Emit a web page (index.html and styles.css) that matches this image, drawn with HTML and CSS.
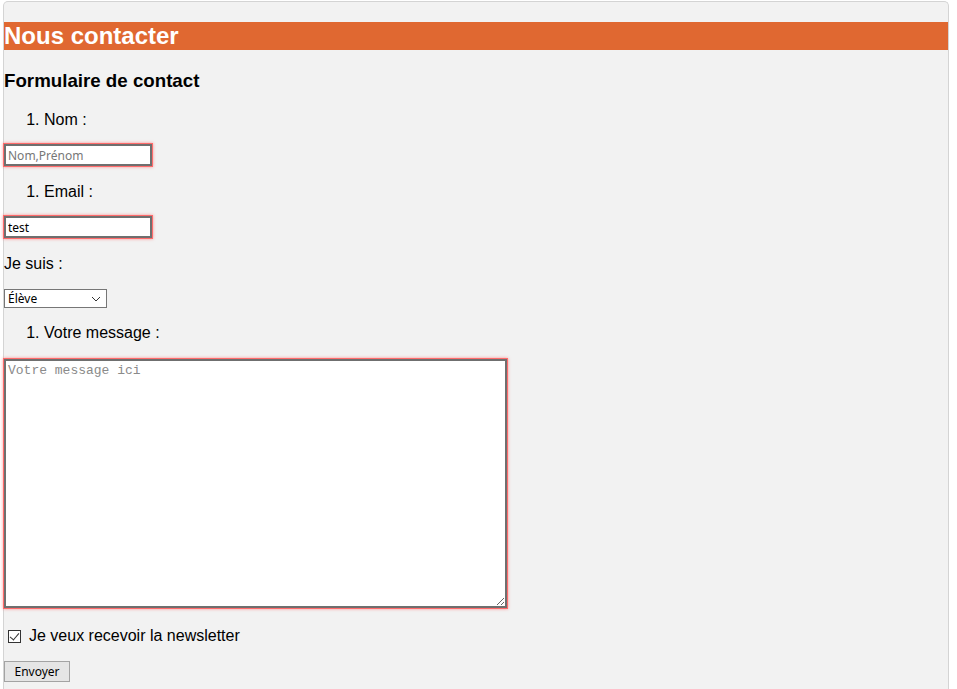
FILE: index.html
```html
<!DOCTYPE html>
<html lang="fr">
<head>
<meta charset="utf-8">
<title>Nous contacter</title>
<link rel="stylesheet" href="styles.css">
</head>
<body>
<div class="page">
  <h1 class="title">Nous contacter</h1>
  <h2 class="subtitle">Formulaire de contact</h2>
  <form class="form">
    <ol class="field-list"><li>Nom :</li></ol>
    <input class="text-input" type="text" placeholder="Nom,Prénom">
    <ol class="field-list"><li>Email :</li></ol>
    <input class="text-input" type="text" value="test">
    <p class="plain-label">Je suis :</p>
    <span class="select-wrap">
      <select class="select">
        <option>Élève</option>
        <option>Parent</option>
        <option>Professeur</option>
      </select>
      <svg class="chevron" width="10" height="6" viewBox="0 0 10 6"><path d="M1 1l4 4 4-4" fill="none" stroke="#333" stroke-width="1"/></svg>
    </span>
    <ol class="field-list"><li>Votre message :</li></ol>
    <textarea class="message" placeholder="Votre message ici"></textarea>
    <p class="check-row"><input class="check" type="checkbox" checked> Je veux recevoir la newsletter</p>
    <button class="submit" type="button">Envoyer</button>
  </form>
</div>
</body>
</html>
```

FILE: styles.css
```css
html, body {
  margin: 0;
  padding: 0;
  background: #ffffff;
}
body {
  font-family: "Liberation Sans", Arial, sans-serif;
  font-size: 16px;
  color: #000;
}
.page {
  margin: 1px 0 0 3px;
  width: 944px;
  min-height: 720px;
  border: 1px solid #d4d4d4;
  border-bottom: none;
  border-radius: 5px 5px 0 0;
  background: #f2f2f2;
  padding-top: 20px;
  box-sizing: content-box;
}
.title {
  margin: 0;
  background: #e06831;
  color: #fff;
  font-size: 24px;
  font-weight: 700;
  line-height: 28px;
}
.subtitle {
  margin: 20px 0 0;
  font-size: 18.72px;
  font-weight: 700;
  line-height: 21px;
}
.form {
  display: flow-root;
}
.field-list {
  margin: 0;
  padding-left: 40px;
  line-height: 18px;
}
.subtitle + .form .field-list:first-child {
  margin-top: 20px;
}
.text-input {
  display: block;
  margin: 15px 0 17px;
  width: 148px;
  height: 22px;
  box-sizing: border-box;
  border: 2px solid #6f6f6f;
  padding: 0 2px;
  background: #fff;
  font-family: "Noto Sans", "Liberation Sans", sans-serif;
  font-size: 12px;
  color: #000;
  box-shadow: 0 0 0 1px #ff6b6b, 0 0 3px 1px rgba(255, 80, 80, 0.55);
  outline: none;
}
.text-input::placeholder {
  color: #777;
}
.plain-label {
  margin: 0 0 16px;
  line-height: 18px;
}
.select-wrap {
  position: relative;
  display: block;
  width: 103px;
  height: 19px;
  margin-bottom: 16px;
}
.select {
  appearance: none;
  -webkit-appearance: none;
  display: block;
  width: 103px;
  height: 19px;
  box-sizing: border-box;
  border: 1px solid #767676;
  border-radius: 0;
  background: #fff;
  padding: 0 0 0 3px;
  font-family: "Noto Sans", "Liberation Sans", sans-serif;
  font-size: 12px;
  color: #000;
  line-height: 17px;
}
.chevron {
  position: absolute;
  right: 6px;
  top: 7px;
  pointer-events: none;
}
.message {
  display: block;
  margin: 17px 0 0;
  width: 503px;
  height: 249px;
  box-sizing: border-box;
  border: 2px solid #6f6f6f;
  padding: 2px 2px;
  background: #fff;
  font-family: "Liberation Mono", "Courier New", monospace;
  font-size: 13px;
  color: #000;
  box-shadow: 0 0 0 1px #ff6b6b, 0 0 3px 1px rgba(255, 80, 80, 0.55);
  outline: none;
}
.message::placeholder {
  color: #8a8a8a;
}
.check-row {
  margin: 18px 0 0;
  line-height: 20px;
  display: flex;
  align-items: center;
}
.check {
  appearance: none;
  -webkit-appearance: none;
  position: relative;
  width: 13px;
  height: 13px;
  margin: 0 8px 0 4px;
  border: 1px solid #333;
  background: #fff;
  box-sizing: border-box;
}
.check:checked::after {
  content: "";
  position: absolute;
  left: 3px;
  top: 0px;
  width: 4px;
  height: 8px;
  border-right: 1.3px solid #333;
  border-bottom: 1.3px solid #333;
  transform: rotate(40deg);
}
.submit {
  display: block;
  margin: 15px 0 0;
  width: 66px;
  height: 21px;
  box-sizing: border-box;
  border: 1px solid #a3a3a3;
  border-radius: 0;
  background: #e5e5e5;
  padding: 0;
  font-family: "Noto Sans", "Liberation Sans", sans-serif;
  font-size: 12px;
  color: #000;
}
```
